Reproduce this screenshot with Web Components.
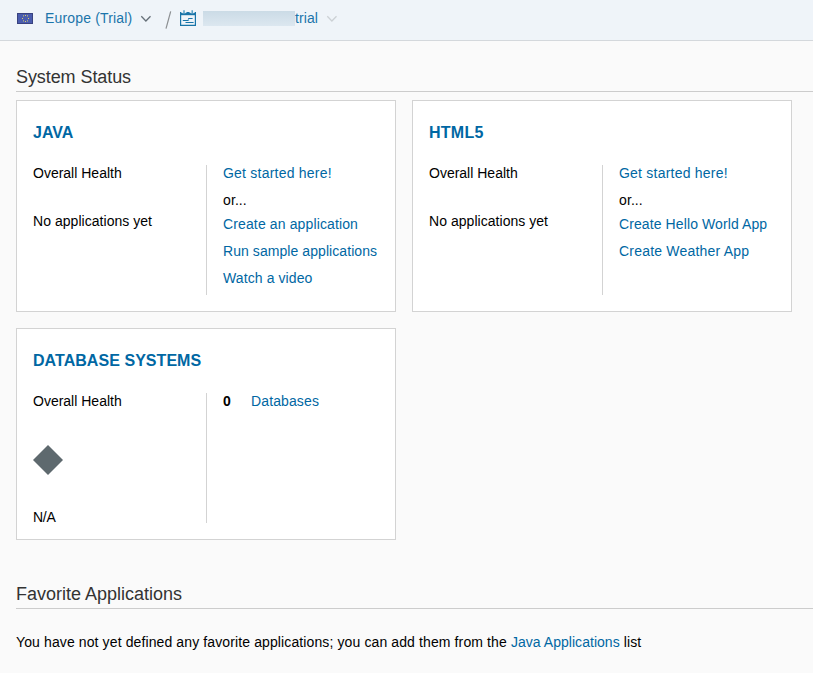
<!DOCTYPE html>
<html lang="en">
<head>
<meta charset="utf-8">
<title>Cockpit</title>
<style>
html,body{margin:0;height:100%;background:#fafafa;overflow:hidden}
body{font:14px/16px "Liberation Sans",Arial,sans-serif;color:#000}
</style>
</head>
<body>
<cockpit-page></cockpit-page>
<script>
function define(name, html) {
  const template = document.createElement('template');
  template.innerHTML = html;
  customElements.define(name, class extends HTMLElement {
    constructor() {
      super();
      this.attachShadow({mode: 'open'}).append(template.content.cloneNode(true));
    }
  });
}

define('text-link', `
<style>
:host{display:inline}
a{color:#0067a3;text-decoration:none;cursor:pointer}
</style><a><slot></slot></a>`);

define('flag-icon', `
<style>:host{display:block;width:16px;height:11px}svg{display:block}</style>
<svg width="16" height="11" viewBox="0 0 16 11">
  <rect width="16" height="11" fill="#39427f"/>
  <rect x="1" y="1" width="14" height="9" fill="#4a5cae"/>
  <g fill="#dccf6c"><rect x="8" y="2" width="1" height="1"/><rect x="6" y="2.4" width="1" height="1"/><rect x="10" y="2.4" width="1" height="1"/><rect x="5" y="5" width="1" height="1"/><rect x="11" y="5" width="1" height="1"/><rect x="6" y="7.4" width="1" height="1"/><rect x="10" y="7.4" width="1" height="1"/><rect x="8" y="8" width="1" height="1"/></g>
</svg>`);

define('account-icon', `
<style>:host{display:block;width:16px;height:16px}svg{display:block}</style>
<svg width="16" height="16" viewBox="0 0 16 16" fill="none" stroke="#1874a8">
  <path d="M.6 2V15.4H15.4V2" stroke-width="1.2"/>
  <path d="M0 4H16" stroke-width="2.4"/>
  <path d="M3.9 0V3.2M12.2 0V3.2" stroke="#eff4f9" stroke-width="3.2"/>
  <path d="M4 .2V3M12.2 .2V3" stroke="#4a98c0" stroke-width="1.4"/>
  <path d="M6.5 2.5H9.5" stroke-width="1"/>
  <path d="M8.2 8.5H12.6M2.8 10.5H7.6L9 9.8M5.5 12.5H13.6" stroke-width="1.15"/>
</svg>`);

define('chevron-icon', `
<style>:host{display:block;width:12px;height:8px}svg{display:block}</style>
<svg width="12" height="8" viewBox="0 0 12 8" fill="none" stroke="currentColor" stroke-width="1.3"><path d="M1.3 1.3 5.9 6 10.5 1.3"/></svg>`);

define('crumb-bar', `
<style>
:host{display:flex;height:40px;border-bottom:1px solid #d4d8dc;background:#eff4f9;color:#1b75ab;padding-left:17px;align-items:flex-start}
flag-icon{margin-top:13px}
.region{margin:10px 0 0 12px;width:95px;white-space:nowrap;letter-spacing:.17px}
chevron-icon{margin-top:15px;color:#667079}
chevron-icon.dim{color:#ccd1d5;margin-left:7px}
.slash{margin:10px 0 0 13px}
account-icon{margin:10px 0 0 8px}
.mask{width:92px;height:15px;margin:11px 0 0 7px;background:linear-gradient(#cbdbe6,#dce7f0)}
.name{margin-top:10px;width:24px;white-space:nowrap;letter-spacing:.1px}
</style>
<flag-icon></flag-icon><span class="region">Europe (Trial)</span><chevron-icon></chevron-icon>
<svg class="slash" width="7" height="20" viewBox="0 0 7 20"><path d="M5.7 1.3 1 18.7" stroke="#8b8e91" stroke-width="1.2"/></svg>
<account-icon></account-icon><span class="mask"></span><span class="name">trial</span><chevron-icon class="dim"></chevron-icon>`);

define('section-title', `
<style>
:host{display:block;box-sizing:border-box;height:26px;border-bottom:1px solid #ccc}
h2{margin:0;padding-top:1px;font-weight:400;font-size:18px;line-height:20px;color:#333}
</style><h2><slot></slot></h2>`);

define('status-card', `
<style>
:host{display:block;box-sizing:border-box;width:380px;height:212px;padding:16px;border:1px solid #d3d3d3;background:#fff}
h3{margin:0 0 16px;font-size:16px;line-height:32px;color:#0067a3;letter-spacing:var(--title-spacing,0)}
.body{display:flex;height:130px}
.health{box-sizing:border-box;width:174px;border-right:1px solid #d3d3d3}
.detail{padding-left:16px;white-space:nowrap}
</style>
<h3><slot name="title"></slot></h3>
<div class="body"><div class="health">Overall Health<slot name="health"></slot></div><div class="detail"><slot></slot></div></div>`);

define('start-links', `
<style>
:host{display:block;letter-spacing:.1px}
.start{letter-spacing:.22px}
.or{margin-top:11px;margin-bottom:8px}
.links{display:grid;grid-auto-rows:16px;row-gap:11px}
</style>
<text-link class="start">Get started here!</text-link><div class="or">or...</div><div class="links"><slot></slot></div>`);

define('health-diamond', `
<style>:host{display:block;letter-spacing:-.3px}svg{display:block;margin:36px 0 34px}</style>
<svg width="30" height="30" viewBox="0 0 30 30"><path d="M15 0 30 15 15 30 0 15Z" fill="#5e696e"/></svg>N/A`);

define('cockpit-page', `
<style>
:host{display:block}
main{padding:25px 0 0 16px}
.cards{display:grid;grid-template-columns:380px 380px;gap:16px;margin:8px 0 43px}
.none{margin-top:32px;letter-spacing:.04px}
p{margin:25px 0 0;white-space:nowrap;letter-spacing:.115px}
p text-link{letter-spacing:.04px}
.count{display:flex;letter-spacing:.12px}
b{width:28px}
</style>
<crumb-bar></crumb-bar>
<main>
<section-title style="letter-spacing:-.08px">System Status</section-title>
<div class="cards">
<status-card><span slot="title">JAVA</span><div slot="health" class="none">No applications yet</div>
<start-links><text-link style="letter-spacing:.13px">Create an application</text-link><text-link style="letter-spacing:.07px">Run sample applications</text-link><text-link>Watch a video</text-link></start-links></status-card>
<status-card style="--title-spacing:.25px"><span slot="title">HTML5</span><div slot="health" class="none">No applications yet</div>
<start-links><text-link>Create Hello World App</text-link><text-link style="letter-spacing:.2px">Create Weather App</text-link></start-links></status-card>
<status-card style="--title-spacing:.05px"><span slot="title">DATABASE SYSTEMS</span><health-diamond slot="health"></health-diamond>
<div class="count"><b>0</b><text-link>Databases</text-link></div></status-card>
</div>
<section-title>Favorite Applications</section-title>
<p>You have not yet defined any favorite applications; you can add them from the <text-link>Java Applications</text-link> list</p>
</main>`);
</script>
</body>
</html>
